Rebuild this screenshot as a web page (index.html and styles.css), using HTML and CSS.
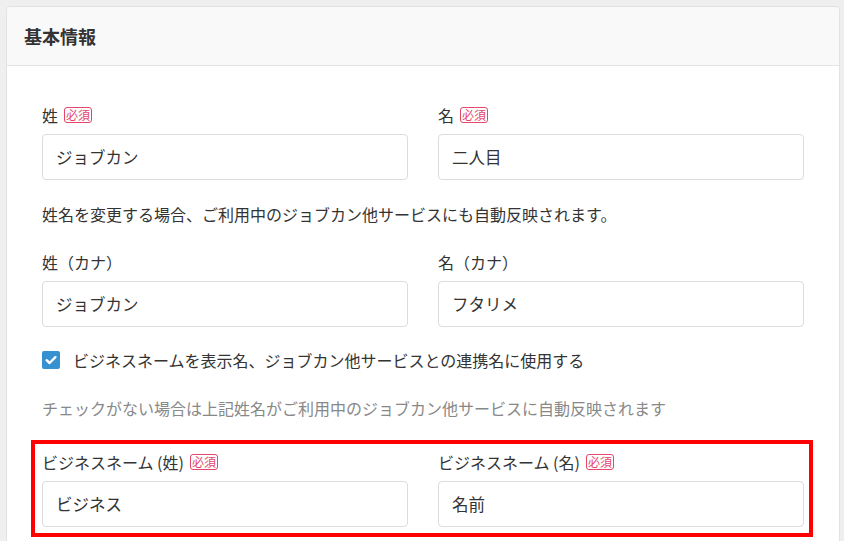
FILE: index.html
```html
<!DOCTYPE html>
<html lang="ja">
<head>
<meta charset="utf-8">
<link rel="stylesheet" href="styles.css">
</head>
<body>
<div class="card">
  <div class="card-header">基本情報</div>
  <div class="card-body">
    <div class="row">
      <div class="field">
        <div class="label">姓<span class="req">必須</span></div>
        <div class="input">ジョブカン</div>
      </div>
      <div class="field">
        <div class="label">名<span class="req">必須</span></div>
        <div class="input">二人目</div>
      </div>
    </div>
    <p class="note">姓名を変更する場合、ご利用中のジョブカン他サービスにも自動反映されます。</p>
    <div class="row">
      <div class="field">
        <div class="label">姓（カナ）</div>
        <div class="input">ジョブカン</div>
      </div>
      <div class="field">
        <div class="label">名（カナ）</div>
        <div class="input">フタリメ</div>
      </div>
    </div>
    <div class="check-row">
      <span class="checkbox"><svg width="18" height="18" viewBox="0 0 18 18"><path d="M4.6 9.2 L7.6 12 L13.4 6.2" fill="none" stroke="#fff" stroke-width="2.4" stroke-linecap="round" stroke-linejoin="round"/></svg></span>
      <span>ビジネスネームを表示名、ジョブカン他サービスとの連携名に使用する</span>
    </div>
    <p class="note muted">チェックがない場合は上記姓名がご利用中のジョブカン他サービスに自動反映されます</p>
    <div class="row biz">
      <div class="field">
        <div class="label">ビジネスネーム (姓)<span class="req">必須</span></div>
        <div class="input">ビジネス</div>
      </div>
      <div class="field">
        <div class="label">ビジネスネーム (名)<span class="req">必須</span></div>
        <div class="input">名前</div>
      </div>
    </div>
  </div>
</div>
<div class="highlight"></div>
</body>
</html>
```
FILE: styles.css
```css
html, body {
  margin: 0;
  padding: 0;
  background: #efefef;
}
body {
  font-family: "Noto Sans CJK JP", "Noto Sans", sans-serif;
  color: #333;
  font-size: 16px;
  width: 844px;
  height: 541px;
  overflow: hidden;
  position: relative;
}
.card {
  margin: 6px 4px 0 6px;
  background: #fff;
  border: 1px solid #e2e2e2;
  border-radius: 4px 4px 0 0;
  height: 560px;
}
.card-header {
  height: 58px;
  line-height: 58px;
  background: #f9f9f9;
  border-bottom: 1px solid #e4e4e4;
  border-radius: 4px 4px 0 0;
  padding-left: 17px;
  font-size: 18px;
  font-weight: bold;
  color: #333;
}
.card-body {
  padding: 38px 35px 0 35px;
}
.row {
  display: grid;
  grid-template-columns: 1fr 1fr;
  column-gap: 30px;
}
.label {
  height: 22px;
  line-height: 22px;
  margin-bottom: 8px;
  display: flex;
  align-items: center;
}
.req {
  display: inline-block;
  margin-left: 6px;
  border: 1px solid #e5466c;
  color: #e5466c;
  border-radius: 3px;
  font-size: 12px;
  line-height: 14px;
  padding: 0 1px;
}
.input {
  height: 46px;
  box-sizing: border-box;
  border: 1px solid #dcdcdc;
  border-radius: 4px;
  padding-left: 13px;
  line-height: 44px;
  font-size: 16.5px;
}
.note {
  margin: 22px 0 25px 0;
  line-height: 24px;
}
.muted {
  color: #888;
  margin: 0 0 31px 0;
}
.check-row {
  margin-top: 21px;
  height: 24px;
  display: flex;
  align-items: center;
  gap: 13px;
  margin-bottom: 24px;
}
.checkbox {
  width: 18px;
  height: 18px;
  background: #3591d0;
  border-radius: 2px;
  display: flex;
}
.highlight {
  position: absolute;
  left: 31px;
  top: 440px;
  width: 782px;
  height: 97px;
  box-sizing: border-box;
  border: 4px solid #ff0000;
}
```
